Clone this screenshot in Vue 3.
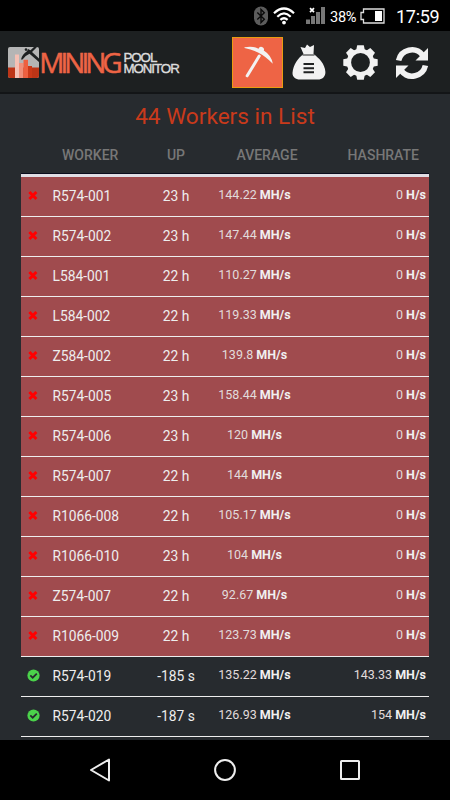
<template>
  <div class="screen">
    <div class="status-bar">
      <svg class="bluetooth" width="14" height="20" viewBox="0 0 14 20">
        <rect x="0" y="0.5" width="14" height="19" rx="7" fill="#5c5c5c" />
        <path d="M3.3 6.5 L10.3 13.3 L7 16.5 V3.5 L10.3 6.7 L3.3 13.5" fill="none" stroke="#0a0a0a" stroke-width="1.4" />
      </svg>
      <svg class="wifi" width="22" height="18" viewBox="0 0 22 18">
        <g fill="none" stroke="#fff" stroke-width="2.2">
          <path d="M1 6.2 Q11 -3.2 21 6.2" />
          <path d="M4.3 9.7 Q11 3.2 17.7 9.7" />
          <path d="M7.4 12.9 Q11 9.6 14.6 12.9" />
        </g>
        <circle cx="11" cy="15.6" r="1.9" fill="#fff" />
      </svg>
      <svg class="signal" width="20" height="17" viewBox="0 0 20 17">
        <g fill="#777">
          <rect x="0" y="12.5" width="4" height="4.5" />
          <rect x="5" y="9" width="4" height="8" />
          <rect x="10" y="5" width="4" height="12" />
          <rect x="15" y="0" width="4" height="17" />
        </g>
        <path d="M4 1.2 L8 5.2 M8 1.2 L4 5.2" stroke="#fff" stroke-width="1.7" />
      </svg>
      <span class="percent">38%</span>
      <svg class="battery" width="25" height="16" viewBox="0 0 25 16">
        <path d="M3.5 1 H24 V15 H3.5 V11.5 H1 V4.5 H3.5 Z" fill="none" stroke="#ddd" stroke-width="1.3" />
        <rect x="15" y="3" width="7" height="10" fill="#fff" />
      </svg>
      <span class="clock">17:59</span>
    </div>

    <header class="header">
      <div class="logo">
        <svg width="180" height="34" viewBox="0 0 180 34">
          <rect x="0" y="0" width="31" height="31" rx="2" fill="#b5b5b5" />
          <path d="M0 20.5 H31 V29 a2 2 0 0 1 -2 2 H2 a2 2 0 0 1 -2 -2 Z" fill="#bd3517" />
          <rect x="7" y="7.5" width="4" height="23.5" fill="#f5c0b4" />
          <rect x="11" y="16" width="4.5" height="15" fill="#f08f7a" />
          <rect x="15.5" y="12.8" width="4.5" height="18.2" fill="#ee6040" />
          <rect x="20" y="19" width="4" height="12" fill="#cb3919" />
          <path d="M13 12.5 Q14 7.5 19 4.2 L20 2 L22.5 3.2 L26 0 H29 L24 5 L31 11.5 V15 L21.5 6.8 Q16.5 9 14.5 12.5 Z" fill="#1d2021" />
          <circle cx="18" cy="2.6" r="1.3" fill="#1d2021" />
          <text class="logo-main" x="31.3" y="26">MINING</text>
          <text class="logo-sub" x="115.5" y="14.7">POOL</text>
          <text class="logo-sub" x="115.5" y="26">MONITOR</text>
        </svg>
      </div>
      <nav class="nav">
        <button class="nav-item active">
          <svg width="49" height="49" viewBox="0 0 49 49">
            <path d="M11.5 9.2 Q20 7.6 25.5 10.7 A2.3 2.3 0 1 1 30.8 12.6 Q38.5 17.5 39.8 25.8 Q33 18.5 25.5 14.7 Q19 11.7 11.5 10 Z" fill="#f2f2f2" />
            <path d="M26.2 18 L14.2 37.8" stroke="#f2f2f2" stroke-width="3" stroke-linecap="round" />
          </svg>
        </button>
        <button class="nav-item bag">
          <svg width="34" height="36" viewBox="0 0 34 36">
            <path d="M11.5 10 L8.5 3 L13 4 L15 0.5 L18 3 L22 1 L21.5 10 C27 14 33 20 33.4 28 C33.5 33 30 35.5 26 35.5 H8 C3.5 35.5 0.5 33 0.5 29 C1 21 6 14 11.5 10 Z" fill="#f2f2f2" />
            <path d="M10.5 11 H22.5" stroke="#202223" stroke-width="1" />
            <path d="M11.5 20 H22 M11.5 24.2 H22 M11.5 28.3 H22" stroke="#202223" stroke-width="2" />
          </svg>
        </button>
        <button class="nav-item gear">
          <svg width="35" height="35" viewBox="-17.5 -17.5 35 35">
            <g fill="#f2f2f2">
              <path v-for="a in gearAngles" :key="a" :transform="`rotate(${a})`" d="M-4.6 -11 L-3.3 -17.2 H3.3 L4.6 -11 Z" />
            </g>
            <circle r="11.6" fill="none" stroke="#f2f2f2" stroke-width="4.4" />
          </svg>
        </button>
        <button class="nav-item refresh">
          <svg width="34" height="34" viewBox="0 0 34 34">
            <g v-for="a in [0, 180]" :key="a" :transform="`rotate(${a} 17 17)`">
              <path d="M3.6 14.5 A13.6 13.6 0 0 1 27.5 9" fill="none" stroke="#f2f2f2" stroke-width="5.6" />
              <path d="M33 2 V14.5 H20.5 Z" fill="#f2f2f2" />
            </g>
          </svg>
        </button>
      </nav>
    </header>

    <main class="content">
      <h1 class="title">44 Workers in List</h1>
      <div class="table">
        <div class="row head">
          <span></span>
          <span class="worker">WORKER</span>
          <span class="up">UP</span>
          <span class="average">AVERAGE</span>
          <span class="hashrate">HASHRATE</span>
        </div>
        <div v-for="w in workers" :key="w.name" class="row" :class="{ down: !w.online }">
          <span class="state">
            <svg v-if="w.online" width="13" height="13" viewBox="0 0 13 13">
              <circle cx="6.5" cy="6.5" r="6.1" fill="#4bd24b" />
              <path d="M3.3 6.4 L5.7 8.7 L9.8 4.7" fill="none" stroke="#262a2e" stroke-width="1.8" />
            </svg>
            <svg v-else width="13" height="13" viewBox="0 0 13 13">
              <path d="M2.4 3 L9.4 10 M9.4 3 L2.4 10" stroke="#f00" stroke-width="2.9" />
            </svg>
          </span>
          <span class="worker">{{ w.name }}</span>
          <span class="up">{{ w.up }}</span>
          <span class="average">{{ w.average }} <b>MH/s</b></span>
          <span class="hashrate">{{ w.rate }} <b>{{ w.online ? 'MH/s' : 'H/s' }}</b></span>
        </div>
      </div>
    </main>

    <div class="nav-bar">
      <svg width="21" height="24" viewBox="0 0 21 24">
        <path d="M20 1.5 V22.5 L2 12 Z" fill="none" stroke="#eee" stroke-width="2" stroke-linejoin="round" />
      </svg>
      <svg width="22" height="22" viewBox="0 0 22 22">
        <circle cx="11" cy="11" r="9.9" fill="none" stroke="#eee" stroke-width="2" />
      </svg>
      <svg width="20" height="20" viewBox="0 0 20 20">
        <rect x="1" y="1" width="18" height="18" rx="0.5" fill="none" stroke="#eee" stroke-width="2" />
      </svg>
    </div>
  </div>
</template>

<script setup>
import { ref } from 'vue'

const gearAngles = [0, 45, 90, 135, 180, 225, 270, 315]

const workers = ref([
  { name: 'R574-001', up: '23 h', average: '144.22', rate: '0', online: false },
  { name: 'R574-002', up: '23 h', average: '147.44', rate: '0', online: false },
  { name: 'L584-001', up: '22 h', average: '110.27', rate: '0', online: false },
  { name: 'L584-002', up: '22 h', average: '119.33', rate: '0', online: false },
  { name: 'Z584-002', up: '22 h', average: '139.8', rate: '0', online: false },
  { name: 'R574-005', up: '23 h', average: '158.44', rate: '0', online: false },
  { name: 'R574-006', up: '23 h', average: '120', rate: '0', online: false },
  { name: 'R574-007', up: '22 h', average: '144', rate: '0', online: false },
  { name: 'R1066-008', up: '22 h', average: '105.17', rate: '0', online: false },
  { name: 'R1066-010', up: '23 h', average: '104', rate: '0', online: false },
  { name: 'Z574-007', up: '22 h', average: '92.67', rate: '0', online: false },
  { name: 'R1066-009', up: '22 h', average: '123.73', rate: '0', online: false },
  { name: 'R574-019', up: '-185 s', average: '135.22', rate: '143.33', online: true },
  { name: 'R574-020', up: '-187 s', average: '126.93', rate: '154', online: true }
])
</script>

<style>
body {
  margin: 0;
  background: #000;
}
</style>

<style scoped>
.screen {
  display: flex;
  flex-direction: column;
  width: 450px;
  height: 800px;
  overflow: hidden;
  background: #272b2f;
  font-family: Roboto, "Liberation Sans", sans-serif;
  color: #eee;
}

.status-bar {
  display: flex;
  align-items: center;
  justify-content: flex-end;
  box-sizing: border-box;
  flex: none;
  height: 31px;
  padding-right: 10px;
  background: #000;
  color: #fff;
}

.bluetooth {
  margin-right: 5px;
}

.signal {
  margin-left: 11px;
}

.percent {
  width: 29px;
  margin-left: 4px;
  font-size: 14.6px;
  letter-spacing: -0.3px;
  padding-top: 2px;
}

.battery {
  margin-left: 1px;
}

.clock {
  width: 44px;
  margin-left: 11px;
  padding-top: 2px;
  font-size: 18px;
  letter-spacing: -0.3px;
}

.header {
  display: flex;
  justify-content: space-between;
  box-sizing: border-box;
  flex: none;
  height: 63px;
  padding: 6px 21px 0 8px;
  background: #1d2021;
  border-bottom: 2px solid #131517;
}

.logo {
  padding-top: 10px;
}

.logo svg,
.nav svg {
  display: block;
}

.logo-main {
  font-family: "Open Sans", sans-serif;
  font-size: 28px;
  letter-spacing: -4px;
  fill: #ee6445;
  stroke: #ee6445;
  stroke-width: 0.5px;
}

.logo-sub {
  font-family: "Liberation Sans", sans-serif;
  font-size: 13.3px;
  letter-spacing: -1.05px;
  fill: #ddd;
  stroke: #ddd;
  stroke-width: 0.4px;
}

.nav {
  display: flex;
  align-items: flex-start;
}

.nav-item {
  margin: 0;
  padding: 0;
  border: 0;
  background: none;
}

.nav-item.active {
  border: 1px solid #e89c10;
  background: #ee6445;
}

.bag {
  margin: 7px 0 0 9px;
}

.gear {
  margin: 8px 0 0 17px;
}

.refresh {
  margin: 9px 0 0 17px;
}

.content {
  flex: 1;
  min-height: 0;
  overflow: hidden;
  padding: 0 21px;
}

.title {
  margin: 0;
  padding: 8px 0 0;
  height: 33px;
  line-height: 29px;
  font-size: 22.6px;
  font-weight: 400;
  text-align: center;
  color: #c93a1b;
}

.row {
  display: grid;
  grid-template-columns: 25px 100px 60px 97px 126px;
  align-items: center;
  box-sizing: border-box;
  height: 40px;
  padding-bottom: 1px;
  border-bottom: 1px solid #eee;
  font-size: 13.8px;
}

.row.head {
  height: 42px;
  padding-bottom: 0;
  border-bottom: 3px solid #e0dde4;
  box-shadow: inset 0 -1px #0a0c1c;
  font-size: 14px;
  font-weight: 500;
  color: #777;
}

.row.down {
  background: #a04b4e;
}

.state {
  padding: 0 0 1px 6px;
}

.state svg {
  display: block;
}

.worker {
  padding-left: 6.5px;
}

.head .worker {
  padding-left: 16px;
}

.up,
.average {
  text-align: center;
}

.average,
.hashrate {
  font-size: 12.5px;
  padding-bottom: 4px;
  color: #e2dcdc;
}

.hashrate {
  padding-right: 3px;
  text-align: right;
}

.row b {
  font-weight: 700;
  color: #f0f0f0;
}

.head .average,
.head .hashrate {
  font-size: 14px;
  padding-bottom: 0;
  color: inherit;
}

.head .average {
  padding-left: 25px;
}

.head .hashrate {
  padding-right: 10px;
}

.nav-bar {
  display: flex;
  align-items: center;
  justify-content: space-between;
  box-sizing: border-box;
  flex: none;
  height: 60px;
  padding: 0 90px 0 89px;
  background: #000;
}
</style>
